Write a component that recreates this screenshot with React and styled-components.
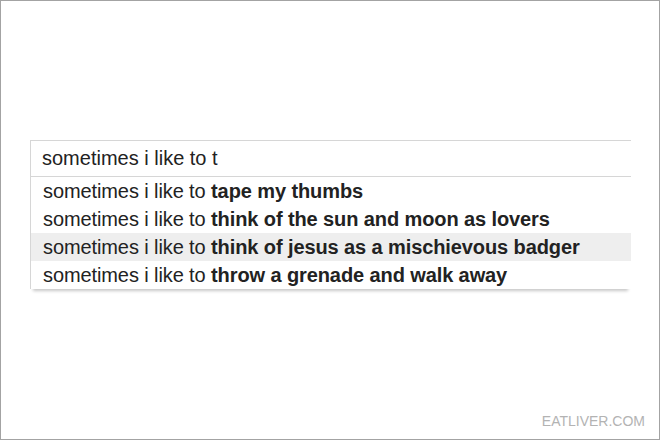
import React from "react";
import styled, { createGlobalStyle } from "styled-components";

const typed = "sometimes i like to ";

const suggestions = [
  { rest: "tape my thumbs" },
  { rest: "think of the sun and moon as lovers" },
  { rest: "think of jesus as a mischievous badger", active: true },
  { rest: "throw a grenade and walk away" },
];

const App = () => {
  return (
    <>
      <GlobalStyle />
      <Frame>
        <Search>
          <Query>{typed}t</Query>
          <List>
            {suggestions.map((s) => (
              <Suggestion key={s.rest} $active={s.active}>
                {typed}
                <b>{s.rest}</b>
              </Suggestion>
            ))}
          </List>
        </Search>
        <Watermark>EATLIVER.COM</Watermark>
      </Frame>
    </>
  );
};

const GlobalStyle = createGlobalStyle`
  body {
    margin: 0;
    background: #fff;
    font-family: "Liberation Sans", Arial, sans-serif;
  }
`;

const Frame = styled.div`
  width: 660px;
  height: 440px;
  box-sizing: border-box;
  border: 1px solid #a3a3a3;
  background: #fff;
  display: flex;
  flex-direction: column;
  padding: 139px 0 0 29px;
`;

const Search = styled.div`
  width: 600px;
  border-top: 1px solid #d6d6d6;
  border-left: 1px solid #d6d6d6;
  background: #fff;
  box-shadow: 0 5px 3px -3px rgba(0, 0, 0, 0.22);
`;

const Query = styled.div`
  height: 35px;
  line-height: 35px;
  padding-left: 11px;
  font-size: 20px;
  color: #222;
  border-bottom: 1px solid #d6d6d6;
`;

const List = styled.div`
  display: flex;
  flex-direction: column;
`;

const Suggestion = styled.div`
  height: 28px;
  line-height: 28px;
  padding-left: 12px;
  font-size: 20px;
  letter-spacing: -0.1px;
  color: #222;
  white-space: nowrap;
  background: ${(p) => (p.$active ? "#eeeeee" : "#fff")};

  b {
    font-weight: bold;
  }
`;

const Watermark = styled.div`
  margin-top: auto;
  align-self: flex-end;
  margin-right: 14px;
  margin-bottom: 10px;
  font-size: 14px;
  color: #b3b3b3;
`;

export default App;
